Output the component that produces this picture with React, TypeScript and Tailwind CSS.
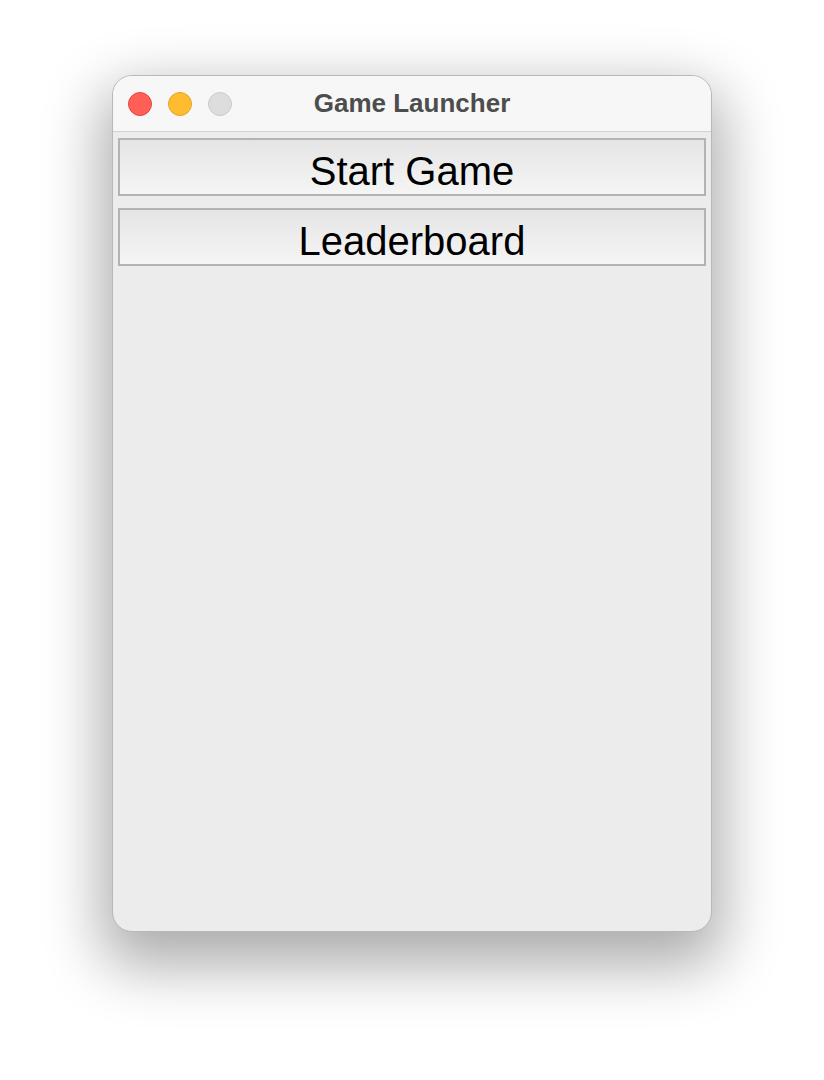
export default function App() {
  return (
    <div className="w-[824px] h-[1080px] bg-white pt-[75px] pl-[112px]" style={{ fontFamily: '"Liberation Sans", Arial, sans-serif' }}>
      <div className="w-[600px] h-[857px] rounded-[20px] overflow-hidden flex flex-col bg-[#ececec] border border-[#b8b8b8] shadow-[0_24px_60px_10px_rgba(0,0,0,0.33)]">
        <div className="relative h-[56px] shrink-0 bg-[#f7f7f7] border-b border-[#d2d2d2] flex items-center">
          <div className="flex items-center gap-[16px] pl-[15px]">
            <div className="w-[24px] h-[24px] rounded-full bg-[#ff5f57] border border-[#e2463f]" />
            <div className="w-[24px] h-[24px] rounded-full bg-[#febc2e] border border-[#e1a325]" />
            <div className="w-[24px] h-[24px] rounded-full bg-[#dddddd] border border-[#c9c9c9]" />
          </div>
          <div className="absolute inset-0 flex items-center justify-center text-[26px] font-bold text-[#4d4d4d] pointer-events-none">
            Game Launcher
          </div>
        </div>
        <div className="flex flex-col gap-[12px] px-[5px] pt-[6px]">
          <div className="h-[58px] border-2 border-[#b3b3b3] bg-gradient-to-b from-[#e5e5e5] to-[#f5f5f5] flex items-center justify-center pt-[8px] text-[40px] text-black leading-none">
            Start Game
          </div>
          <div className="h-[58px] border-2 border-[#b3b3b3] bg-gradient-to-b from-[#e5e5e5] to-[#f5f5f5] flex items-center justify-center pt-[8px] text-[40px] text-black leading-none">
            Leaderboard
          </div>
        </div>
      </div>
    </div>
  );
}
